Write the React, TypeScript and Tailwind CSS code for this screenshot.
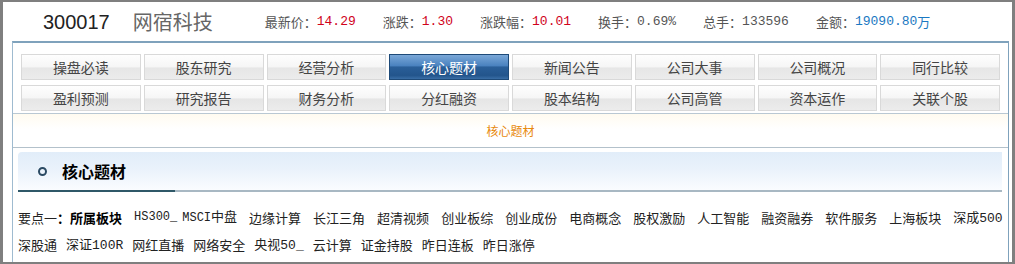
const row1 = ["操盘必读", "股东研究", "经营分析", "核心题材", "新闻公告", "公司大事", "公司概况", "同行比较"];
const row2 = ["盈利预测", "研究报告", "财务分析", "分红融资", "股本结构", "公司高管", "资本运作", "关联个股"];

const stats = [
  { label: "最新价：", value: "14.29", color: "text-[#d0021b]" },
  { label: "涨跌：", value: "1.30", color: "text-[#d0021b]" },
  { label: "涨跌幅：", value: "10.01", color: "text-[#d0021b]" },
  { label: "换手：", value: "0.69%", color: "text-[#555]" },
  { label: "总手：", value: "133596", color: "text-[#555]" },
];

const line1 = ["边缘计算", "长江三角", "超清视频", "创业板综", "创业成份", "电商概念", "股权激励", "人工智能", "融资融券", "软件服务", "上海板块"];

function Tab({ label, active }: { label: string; active?: boolean }) {
  if (active) {
    return (
      <div className="flex h-[26px] items-center justify-center border border-[#1e4a78] bg-[linear-gradient(to_bottom,#7aa8d8_0%,#4a82bf_45%,#2a5f99_50%,#23558c_85%,#3a6ea6_100%)] text-[14px] text-white">
        {label}
      </div>
    );
  }
  return (
    <div className="flex h-[26px] items-center justify-center border border-[#d9d9d9] bg-[linear-gradient(to_bottom,#fefefe_0%,#f6f6f6_48%,#e6e6e6_55%,#ececec_100%)] text-[14px] text-[#444]">
      {label}
    </div>
  );
}

export default function App() {
  return (
    <div className="flex h-[264px] w-[1015px] flex-col border-t-2 border-l-[3px] border-r-[3px] border-b-2 border-[#7f7f7f] bg-white font-['Noto_Sans_CJK_SC',sans-serif]">
      <header className="flex h-[39px] shrink-0 items-center pl-[40px]">
        <span className="font-['Liberation_Sans',sans-serif] text-[20px] text-[#222]">300017</span>
        <span className="ml-[23px] text-[20px] leading-none text-[#666]">网宿科技</span>
        <div className="ml-[52px] flex items-center gap-[27px] text-[13px]">
          {stats.map((s) => (
            <span key={s.label} className="flex items-center">
              <span className="text-[#555]">{s.label}</span>
              <span className={`font-['Liberation_Mono',monospace] ${s.color}`}>{s.value}</span>
            </span>
          ))}
          <span className="flex items-center">
            <span className="text-[#555]">金额：</span>
            <span className="font-['Liberation_Mono',monospace] text-[#1a78c2]">19090.80</span>
            <span className="text-[#1a78c2]">万</span>
          </span>
        </div>
      </header>

      <div className="ml-[9px] mr-[3px] flex flex-1 flex-col border-x border-t-2 border-[#7fa2bc] border-l-[#9fbbd0]">
        <div className="grid grid-cols-8 gap-x-[3px] gap-y-[5px] pl-[8px] pr-[8px] pt-[11px]">
          {row1.map((t) => (
            <Tab key={t} label={t} active={t === "核心题材"} />
          ))}
          {row2.map((t) => (
            <Tab key={t} label={t} />
          ))}
        </div>

        <div className="mt-[2px] flex flex-1 flex-col border-t border-[#b9c8d3]">
          <div className="flex h-[34px] shrink-0 items-center justify-center border-b border-[#b3c1cb] bg-[linear-gradient(to_bottom,#fffbf0_0%,#ffffff_45%)] text-[12px] text-[#e8890c]">
            核心题材
          </div>

          <div className="ml-[5px] mr-[6px] mt-[4px]">
            <div className="flex h-[38px] items-center rounded-tl-[4px] bg-[linear-gradient(to_bottom,#e1edf9_0%,#eaf2fb_45%,#fafcff_100%)]">
              <span className="ml-[20px] h-[9px] w-[9px] rounded-full border-2 border-[#2b4a63]" />
              <span className="ml-[15px] text-[16px] font-bold text-black">核心题材</span>
            </div>
            <div className="flex h-[2px]">
              <div className="w-[157px] bg-[#2f5868]" />
              <div className="flex-1 bg-[#a8b8c3]" />
            </div>
          </div>

          <div className="ml-[5px] pt-[11px] text-[13px] leading-[25px] text-[#222]">
            <div className="flex items-center gap-x-[12px] whitespace-nowrap">
              <span>
                要点一<b className="font-bold text-black">：所属板块</b>
              </span>
              <span className="font-['Liberation_Mono',monospace] text-[12px]">HS300_</span>
              <span className="-ml-[7px]">
                <span className="font-['Liberation_Mono',monospace] text-[12px]">MSCI</span>中盘
              </span>
              {line1.map((t) => (
                <span key={t}>{t}</span>
              ))}
              <span>
                深成<span className="font-['Liberation_Mono',monospace]">500</span>
              </span>
            </div>
            <div className="flex items-center gap-x-[9px] whitespace-nowrap">
              <span>深股通</span>
              <span>
                深证<span className="font-['Liberation_Mono',monospace]">100R</span>
              </span>
              <span>网红直播</span>
              <span>网络安全</span>
              <span>
                央视<span className="font-['Liberation_Mono',monospace]">50_</span>
              </span>
              <span>云计算</span>
              <span>证金持股</span>
              <span>昨日连板</span>
              <span>昨日涨停</span>
            </div>
          </div>
        </div>
      </div>
    </div>
  );
}
